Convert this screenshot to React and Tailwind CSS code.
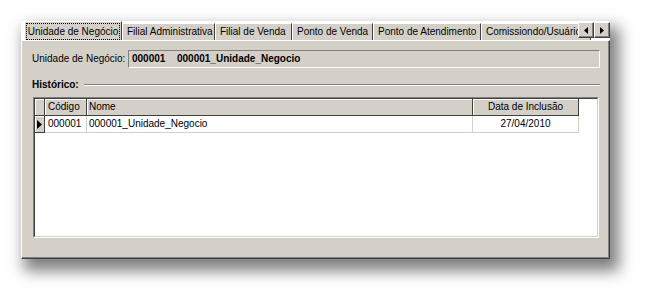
const tabs = [
  { label: 'Unidade de Negócio', w: 'w-[98px]', active: true },
  { label: 'Filial Administrativa', w: 'w-[93px]' },
  { label: 'Filial de Venda', w: 'w-[77px]' },
  { label: 'Ponto de Venda', w: 'w-[81px]' },
  { label: 'Ponto de Atendimento', w: 'w-[108px]' },
  { label: 'Comissiondo/Usuário', w: 'w-[110px]' },
]

const Tab = ({ label, w, active }) => {
  if (active) {
    return (
      <div className={`${w} h-[20px] -mb-px relative z-10 shrink-0 bg-[#d4d0c8] border-l border-t border-white border-r border-r-[#404040] p-px`}>
        <div className="h-full border border-dotted border-black flex items-center justify-center whitespace-nowrap">
          {label}
        </div>
      </div>
    )
  }
  return (
    <div className={`${w} h-[17px] shrink-0 bg-[#d4d0c8] border-l border-t border-white border-r border-r-[#404040] flex items-center pl-[4px] whitespace-nowrap overflow-hidden`}>
      {label}
    </div>
  )
}

const ArrowButton = ({ dir }) => (
  <div className="w-[16px] h-[16px] bg-[#d4d0c8] border-l border-t border-white border-r border-b border-r-[#404040] border-b-[#404040] shadow-[inset_-1px_-1px_0_#808080] flex items-center justify-center">
    <svg width="4" height="7" viewBox="0 0 4 7">
      {dir === 'left' ? <path d="M4 0 L0 3.5 L4 7 Z" fill="#000" /> : <path d="M0 0 L4 3.5 L0 7 Z" fill="#000" />}
    </svg>
  </div>
)

export default function App() {
  return (
    <div className="w-[652px] h-[301px] bg-white pt-[21px] pl-[21px] font-['Liberation_Sans',Arial,sans-serif] text-[10px] text-black leading-none">
      <div className="w-[589px] h-[238px] flex flex-col shadow-[6px_9px_14px_3px_rgba(0,0,0,0.5)] bg-white">
        <div className="h-[19px] relative flex items-end pl-[3px] overflow-hidden">
          {tabs.map((t) => (
            <Tab key={t.label} {...t} />
          ))}
          <div className="absolute right-0 top-[1px] flex">
            <ArrowButton dir="left" />
            <ArrowButton dir="right" />
          </div>
        </div>

        <div className="flex-1 flex flex-col bg-[#d4d0c8] border-l border-t border-white border-r border-b border-r-[#404040] border-b-[#404040] shadow-[inset_-1px_-1px_0_#808080] pt-[9px] pl-[10px] pr-[9px]">
          <div className="flex items-center h-[18px]">
            <div className="w-[96px] shrink-0">Unidade de Negócio:</div>
            <div className="flex-1 h-[18px] border-l border-t border-[#808080] border-r border-b border-r-white border-b-white flex items-center pl-[3px] font-bold">
              <span className="w-[45px]">000001</span>
              <span>000001_Unidade_Negocio</span>
            </div>
          </div>

          <div className="flex items-center h-[12px] mt-[11px]">
            <span className="font-bold">Histórico:</span>
            <div className="flex-1 ml-[5px] border-t border-[#808080] border-b border-b-white" />
          </div>

          <div className="mt-[6px] mx-px h-[141px] flex border-l border-t border-[#808080] border-r border-b border-r-white border-b-white">
            <div className="flex-1 flex flex-col bg-white border-l border-t border-[#404040] border-r border-b border-r-[#d4d0c8] border-b-[#d4d0c8]">
              <div className="flex h-[17px]">
                <div className="w-[10px] bg-[#d4d0c8] border-r border-b border-[#404040] shadow-[inset_1px_1px_0_white]" />
                <div className="w-[42px] bg-[#d4d0c8] border-r border-b border-[#404040] shadow-[inset_1px_1px_0_white] flex items-center pl-[3px]">Código</div>
                <div className="w-[386px] bg-[#d4d0c8] border-r border-b border-[#404040] shadow-[inset_1px_1px_0_white] flex items-center pl-[2px]">Nome</div>
                <div className="w-[106px] bg-[#d4d0c8] border-r border-b border-[#404040] shadow-[inset_1px_1px_0_white] flex items-center justify-center">Data de Inclusão</div>
              </div>
              <div className="flex h-[17px]">
                <div className="w-[10px] bg-[#d4d0c8] border-r border-b border-[#404040] shadow-[inset_1px_1px_0_white] flex items-center justify-center">
                  <svg width="5" height="9" viewBox="0 0 5 9">
                    <path d="M0 0 L5 4.5 L0 9 Z" fill="#000" />
                  </svg>
                </div>
                <div className="w-[42px] border-r border-b border-[#d4d0c8] flex items-center pl-[3px]">000001</div>
                <div className="w-[386px] border-r border-b border-[#d4d0c8] flex items-center pl-[2px]">000001_Unidade_Negocio</div>
                <div className="w-[106px] border-r border-b border-[#d4d0c8] flex items-center justify-center">27/04/2010</div>
              </div>
            </div>
          </div>
        </div>
      </div>
    </div>
  )
}
